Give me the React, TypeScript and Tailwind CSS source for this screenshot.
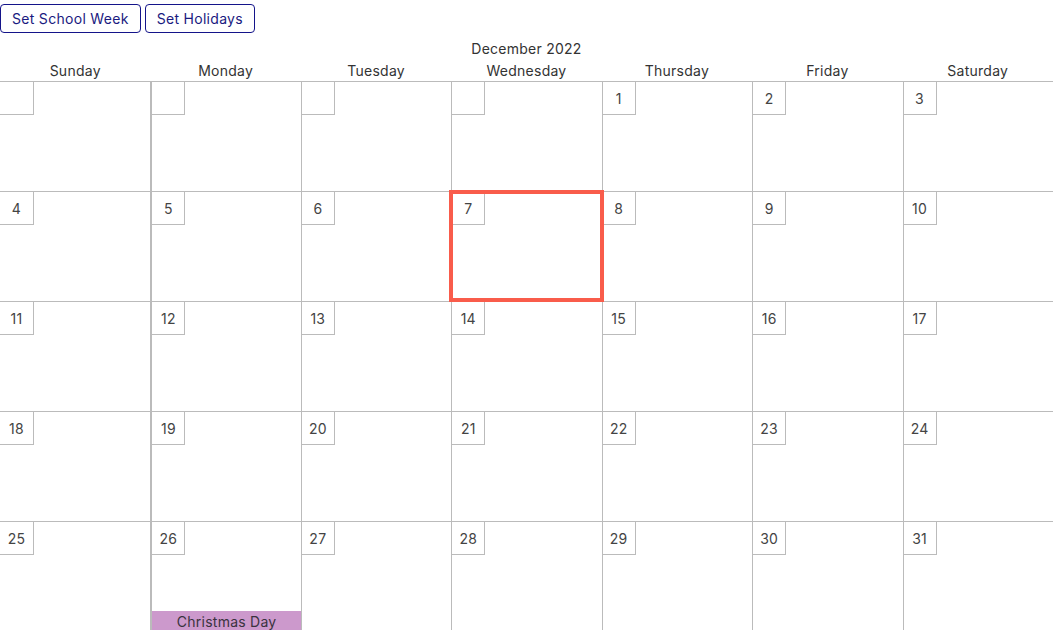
import React from "react";

const days = ["Sunday", "Monday", "Tuesday", "Wednesday", "Thursday", "Friday", "Saturday"];

export default function App() {
  const cells: (number | null)[] = [null, null, null, null];
  for (let d = 1; d <= 31; d++) cells.push(d);

  return (
    <div
      className="w-[1053px] h-[630px] overflow-hidden bg-white text-[#333] text-[14px] tracking-[0.25px]"
      style={{ fontFamily: "Inter, 'Liberation Sans', sans-serif" }}
    >
      <div className="flex gap-1 pt-1">
        <button className="h-[29px] px-[11px] rounded-[4px] border border-[#14148a] text-[#1a1a80] bg-white text-[14px] leading-none tracking-[0.3px]">
          Set School Week
        </button>
        <button className="h-[29px] px-[11px] rounded-[4px] border border-[#14148a] text-[#1a1a80] bg-white text-[14px] leading-none tracking-[0.3px]">
          Set Holidays
        </button>
      </div>
      <div className="mt-1 h-[22px] flex items-center justify-center">December 2022</div>
      <div className="grid grid-cols-7 h-[22px]">
        {days.map((d) => (
          <div key={d} className="flex items-center justify-center">
            {d}
          </div>
        ))}
      </div>
      <div className="grid grid-cols-7">
        {cells.map((n, i) => {
          const col = i % 7;
          const left = col === 0 ? "" : col === 1 ? "border-l-2" : "border-l";
          return (
            <div
              key={i}
              className={`relative h-[110px] border-t border-[#bbbbbb] ${left}`}
            >
              <div
                className={`${col === 0 ? "w-[34px]" : "w-[33px]"} h-[33px] border-r border-b border-[#bbbbbb] flex items-center justify-center text-[#444]`}
              >
                {n ?? ""}
              </div>
              {n === 26 && (
                <div className="absolute left-0 right-0 -bottom-[1px] h-[21px] bg-[#cc99cc] flex items-center justify-center text-[#3a3340]">
                  Christmas Day
                </div>
              )}
              {n === 7 && (
                <div className="absolute -left-[3px] -top-[2px] -right-[2px] -bottom-[1px] border-4 border-[#f95c4b] z-10" />
              )}
            </div>
          );
        })}
      </div>
    </div>
  );
}
